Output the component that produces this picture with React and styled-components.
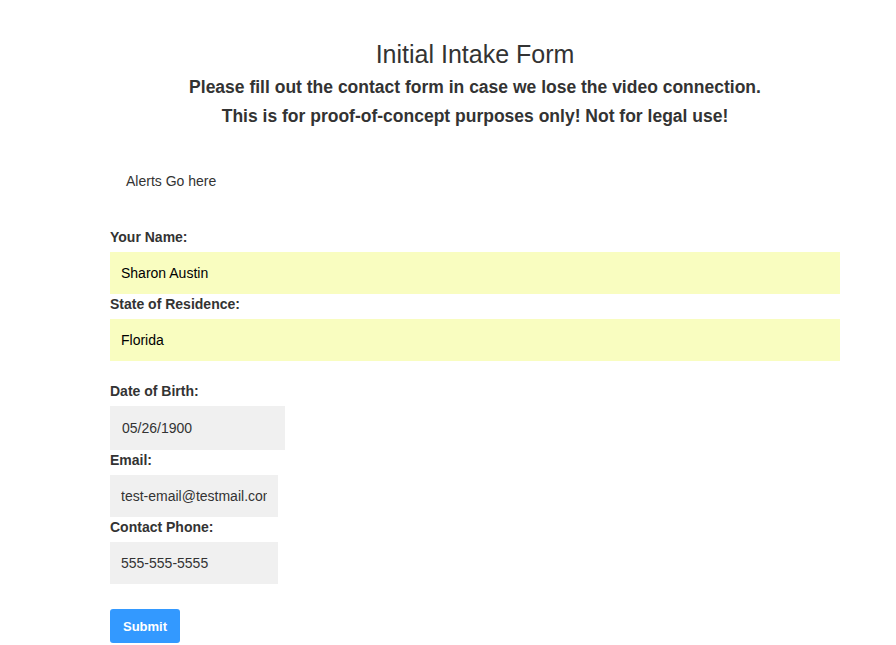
import React from 'react'
import styled, { createGlobalStyle } from 'styled-components'

const GlobalStyle = createGlobalStyle`
  body {
    margin: 0;
    background: #fff;
    font-family: "Liberation Sans", Arial, Helvetica, sans-serif;
    color: #333;
  }
`

const Page = styled.div`
  width: 730px;
  margin-left: 110px;
  padding-top: 40px;
`

const Header = styled.header`
  text-align: center;
`

const Title = styled.h1`
  margin: 0 0 5px;
  font-size: 25px;
  font-weight: normal;
  line-height: 28px;
  color: #333;
`

const Subtitle = styled.p`
  margin: 0;
  font-size: 17.5px;
  line-height: 29px;
  font-weight: ${(p) => (p.$strong ? 'bold' : 'normal')};
  color: #333;
`

const Alerts = styled.div`
  padding: 42px 16px 0;
  font-size: 14px;
  line-height: 16px;
  color: #333;
`

const Form = styled.form`
  padding-top: 38px;
`

const Section = styled.div`
  & + & {
    margin-top: 23px;
  }
`

const Label = styled.label`
  display: block;
  margin: 3px 0 7px;
  font-size: 14px;
  line-height: 15px;
  font-weight: bold;
  color: #333;
`

const Input = styled.input`
  display: block;
  box-sizing: border-box;
  width: ${(p) => p.$width || '100%'};
  height: ${(p) => p.$height || '42px'};
  padding: 0 11px;
  border: none;
  outline: none;
  background: ${(p) => (p.$filled ? '#f9fdc0' : '#f0f0f0')};
  font-family: inherit;
  font-size: 14px;
  color: ${(p) => (p.$filled ? '#000' : '#333')};
`

const Submit = styled.button`
  margin-top: 25px;
  height: 34px;
  padding: 0 13px;
  border: none;
  border-radius: 3px;
  background: #3399ff;
  color: #fff;
  font-family: inherit;
  font-size: 13px;
  font-weight: bold;
  cursor: pointer;
`

export default function App() {
  return (
    <>
      <GlobalStyle />
      <Page>
        <Header>
          <Title>Initial Intake Form</Title>
          <Subtitle $strong>Please fill out the contact form in case we lose the video connection.</Subtitle>
          <Subtitle $strong>This is for proof-of-concept purposes only! Not for legal use!</Subtitle>
        </Header>
        <Alerts>Alerts Go here</Alerts>
        <Form onSubmit={(e) => e.preventDefault()}>
          <Section>
            <Label htmlFor="name">Your Name:</Label>
            <Input id="name" $filled defaultValue="Sharon Austin" />
            <Label htmlFor="state">State of Residence:</Label>
            <Input id="state" $filled defaultValue="Florida" />
          </Section>
          <Section>
            <Label htmlFor="dob">Date of Birth:</Label>
            <Input id="dob" $width="175px" $height="44px" defaultValue="05/26/1900" style={{ paddingLeft: 12 }} />
            <Label htmlFor="email">Email:</Label>
            <Input id="email" $width="168px" defaultValue="test-email@testmail.com" />
            <Label htmlFor="phone">Contact Phone:</Label>
            <Input id="phone" $width="168px" defaultValue="555-555-5555" />
          </Section>
          <Submit type="submit">Submit</Submit>
        </Form>
      </Page>
    </>
  )
}
